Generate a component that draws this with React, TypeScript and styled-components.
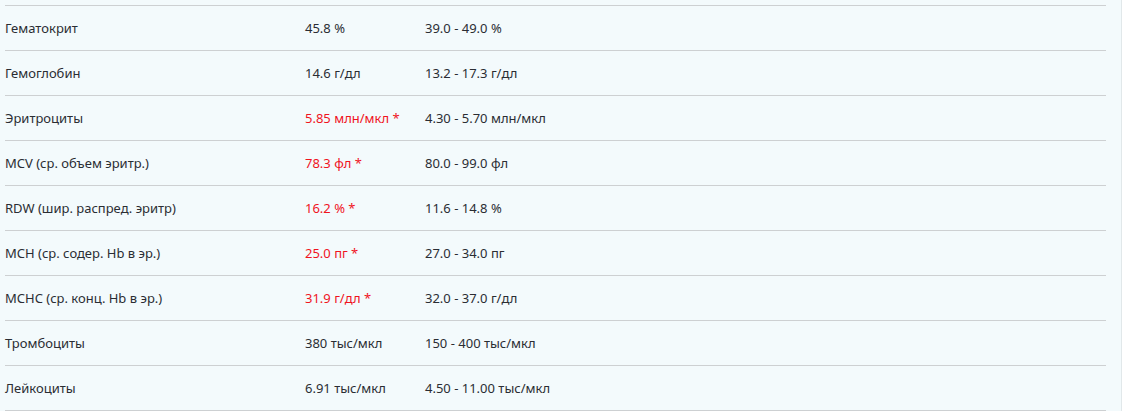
import React from "react";
import styled, { createGlobalStyle } from "styled-components";

type Row = {
  name: string;
  value: string;
  range: string;
  abnormal?: boolean;
};

const rows: Row[] = [
  { name: "Гематокрит", value: "45.8 %", range: "39.0 - 49.0 %" },
  { name: "Гемоглобин", value: "14.6 г/дл", range: "13.2 - 17.3 г/дл" },
  { name: "Эритроциты", value: "5.85 млн/мкл *", range: "4.30 - 5.70 млн/мкл", abnormal: true },
  { name: "MCV (ср. объем эритр.)", value: "78.3 фл *", range: "80.0 - 99.0 фл", abnormal: true },
  { name: "RDW (шир. распред. эритр)", value: "16.2 % *", range: "11.6 - 14.8 %", abnormal: true },
  { name: "MCH (ср. содер. Hb в эр.)", value: "25.0 пг *", range: "27.0 - 34.0 пг", abnormal: true },
  { name: "MCHC (ср. конц. Hb в эр.)", value: "31.9 г/дл *", range: "32.0 - 37.0 г/дл", abnormal: true },
  { name: "Тромбоциты", value: "380 тыс/мкл", range: "150 - 400 тыс/мкл" },
  { name: "Лейкоциты", value: "6.91 тыс/мкл", range: "4.50 - 11.00 тыс/мкл" },
];

const GlobalStyle = createGlobalStyle`
  body {
    margin: 0;
    background: #f3fafc;
    font-family: "Noto Sans", "Liberation Sans", sans-serif;
  }
`;

const Page = styled.div`
  width: 1121px;
  height: 411px;
  border-right: 1px solid #e1e8ea;
  background: #f3fafc;
  overflow: hidden;
`;

const Table = styled.div`
  width: 1101px;
  margin: 5px 0 0 5px;
`;

const TableRow = styled.div`
  display: grid;
  grid-template-columns: 300px 120px 1fr;
  align-items: center;
  height: 44px;
  border-top: 1px solid #cdd0d2;

  &:last-child {
    border-bottom: 1px solid #cdd0d2;
  }
`;

const Cell = styled.div<{ $alert?: boolean }>`
  font-size: 13px;
  color: ${(p) => (p.$alert ? "#f0141e" : "#2a2d33")};
  white-space: nowrap;
`;

const App: React.FC = () => {
  return (
    <>
      <GlobalStyle />
      <Page>
        <Table>
          {rows.map((row) => (
            <TableRow key={row.name}>
              <Cell>{row.name}</Cell>
              <Cell $alert={row.abnormal}>{row.value}</Cell>
              <Cell>{row.range}</Cell>
            </TableRow>
          ))}
        </Table>
      </Page>
    </>
  );
};

export default App;
